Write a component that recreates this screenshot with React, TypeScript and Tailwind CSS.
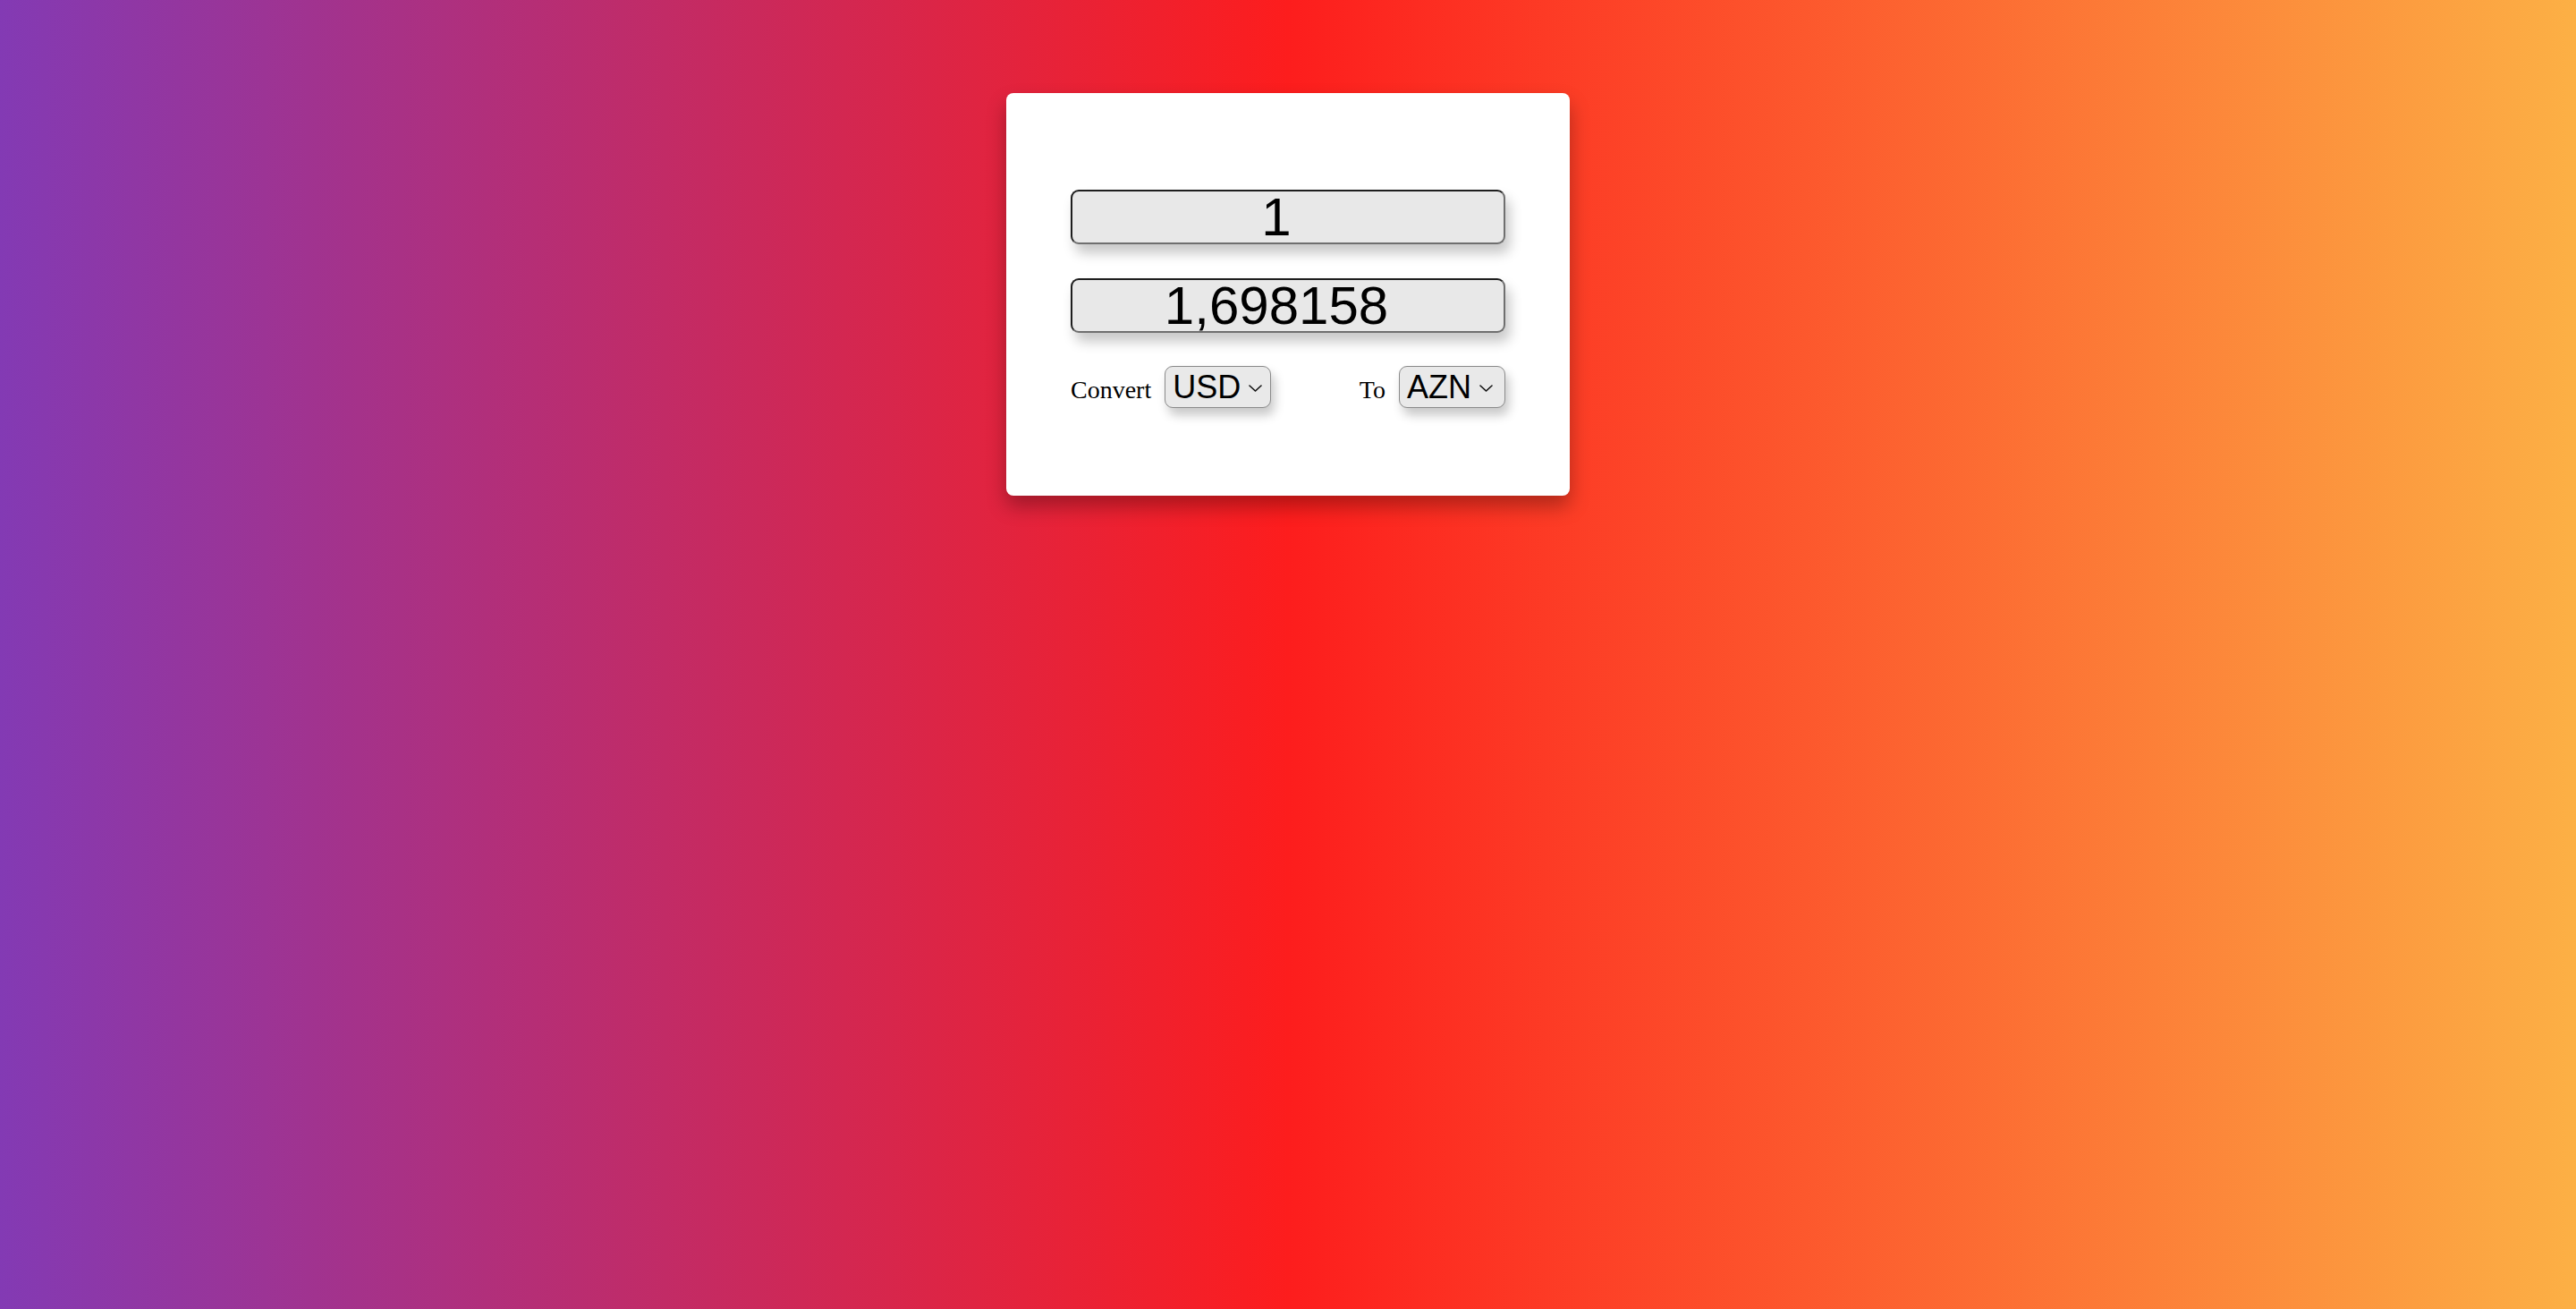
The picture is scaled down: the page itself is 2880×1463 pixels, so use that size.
import React from "react";

function Chevron() {
  return (
    <svg width="15" height="8" viewBox="0 0 15 8" fill="none" className="ml-[9px] mt-[2px]">
      <path d="M1 1 L7.5 7 L14 1" stroke="#111" strokeWidth="1.6" strokeLinecap="round" strokeLinejoin="round" />
    </svg>
  );
}

function FakeSelect({ value }: { value: string }) {
  return (
    <div className="flex h-[47px] w-[119px] items-center rounded-[9px] border border-[#8a8a8a] bg-[#e9e9e9] pl-[8px] pr-[8px] shadow-[4px_8px_12px_rgba(0,0,0,0.22)]">
      <span className="text-[36px] leading-none text-black [font-family:'Liberation_Sans',Arial,sans-serif]">{value}</span>
      <Chevron />
    </div>
  );
}

export default function App() {
  return (
    <div className="min-h-screen w-full bg-[linear-gradient(90deg,#833ab4_0%,#fd1d1d_50%,#fcb045_100%)] pt-[104px]">
      <div className="mx-auto flex w-[630px] flex-col rounded-[8px] bg-white px-[72px] pb-[98px] pt-[108px] shadow-[0_12px_22px_rgba(0,0,0,0.3)]">
        <div className="flex h-[61px] w-full items-center justify-center rounded-[9px] border-2 border-b-[#6f6f6f] border-l-[#1e1e1e] border-r-[#6f6f6f] border-t-[#1e1e1e] bg-[#e8e8e8] pr-[26px] shadow-[5px_10px_14px_rgba(0,0,0,0.22)]">
          <span className="text-[60px] leading-none text-black [font-family:'Liberation_Sans',Arial,sans-serif]">1</span>
        </div>
        <div className="mt-[38px] flex h-[61px] w-full items-center justify-center rounded-[9px] border-2 border-b-[#6f6f6f] border-l-[#1e1e1e] border-r-[#6f6f6f] border-t-[#1e1e1e] bg-[#e8e8e8] pr-[26px] shadow-[5px_10px_14px_rgba(0,0,0,0.22)]">
          <span className="text-[60px] leading-none text-black [font-family:'Liberation_Sans',Arial,sans-serif]">1,698158</span>
        </div>
        <div className="mt-[37px] flex items-center justify-between">
          <div className="flex items-center gap-[15px]">
            <span className="mt-[6px] text-[28px] leading-none text-black [font-family:'Liberation_Serif','Times_New_Roman',serif]">Convert</span>
            <FakeSelect value="USD" />
          </div>
          <div className="flex items-center gap-[15px]">
            <span className="mt-[6px] text-[28px] leading-none text-black [font-family:'Liberation_Serif','Times_New_Roman',serif]">To</span>
            <FakeSelect value="AZN" />
          </div>
        </div>
      </div>
    </div>
  );
}
